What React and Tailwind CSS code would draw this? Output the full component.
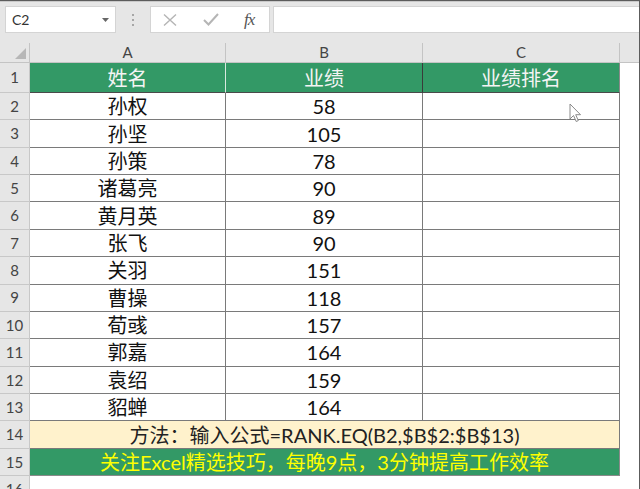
import React from 'react'

const rows = [
  ['孙权', '58'],
  ['孙坚', '105'],
  ['孙策', '78'],
  ['诸葛亮', '90'],
  ['黄月英', '89'],
  ['张飞', '90'],
  ['关羽', '151'],
  ['曹操', '118'],
  ['荀彧', '157'],
  ['郭嘉', '164'],
  ['袁绍', '159'],
  ['貂蝉', '164'],
]

const font = "font-['Lato','Noto_Sans_CJK_SC',sans-serif]"

function RowHead({ n, h = 'h-[27.36px]' }) {
  return (
    <div className={`w-[30px] shrink-0 ${h} flex items-center justify-center bg-[#e6e6e6] border-r border-b border-[#c8c8c8] text-[15px] text-[#444] ${font}`}>
      {n}
    </div>
  )
}

function Cursor() {
  return (
    <svg className="absolute left-[569px] top-[102px]" width="14" height="20" viewBox="0 0 14 20">
      <path d="M1 1 L1 16 L4.5 12.5 L7.2 18.5 L9.3 17.6 L6.7 11.7 L11.5 11.7 Z" fill="#fff" stroke="#8a8a8a" strokeWidth="1" strokeLinejoin="round" />
    </svg>
  )
}

export default function App() {
  return (
    <div className="relative w-[640px] h-[489px] overflow-hidden bg-white border-t border-r border-[#5c5c5c]">
      {/* formula bar */}
      <div className="bg-[#e6e6e6] border-t border-[#c9c9c9]">
        <div className="flex items-center h-[33px] pt-[2px]">
          <div className="ml-[5px] w-[111px] h-[27px] bg-white border border-[#d4d4d4] flex items-center justify-between pl-[6px] pr-[6px]">
            <span className={`text-[14px] text-[#333] ${font}`}>C2</span>
            <svg width="7" height="4" viewBox="0 0 7 4"><path d="M0 0 L7 0 L3.5 4 Z" fill="#666" /></svg>
          </div>
          <div className="w-[34px] flex flex-col items-center gap-[3px]">
            <span className="w-[2px] h-[2px] bg-[#a6a6a6]" />
            <span className="w-[2px] h-[2px] bg-[#a6a6a6]" />
            <span className="w-[2px] h-[2px] bg-[#a6a6a6]" />
          </div>
          <div className="w-[120px] h-[27px] bg-white border border-[#d4d4d4] flex items-center">
            <svg className="ml-[12px]" width="14" height="12" viewBox="0 0 14 12">
              <path d="M1 0.5 L13 11.5 M13 0.5 L1 11.5" stroke="#b5b5b5" strokeWidth="1.4" />
            </svg>
            <svg className="ml-[26px]" width="16" height="13" viewBox="0 0 16 13">
              <path d="M1 7 L5.5 11.5 L15 1" stroke="#b5b5b5" strokeWidth="2" fill="none" />
            </svg>
            <span className="ml-[25px] text-[17px] italic text-[#555] font-['Liberation_Serif',serif] tracking-[-1px]">fx</span>
          </div>
          <div className="ml-[3px] flex-1 h-[27px] bg-white border border-[#d4d4d4] border-r-0" />
        </div>
        <div className="h-[8px]" />
        {/* column headers */}
        <div className={`flex h-[20px] border-b border-[#c4c4c4] text-[15px] text-[#444] ${font}`}>
          <div className="w-[30px] shrink-0 relative border-r border-[#c4c4c4]">
            <svg className="absolute left-[15px] top-[5px]" width="11" height="11" viewBox="0 0 11 11"><path d="M11 0 L11 11 L0 11 Z" fill="#b7b7b7" /></svg>
          </div>
          <div className="w-[196px] shrink-0 flex items-center justify-center border-r border-[#c4c4c4]">A</div>
          <div className="w-[197px] shrink-0 flex items-center justify-center border-r border-[#c4c4c4]">B</div>
          <div className="w-[197px] shrink-0 flex items-center justify-center border-r border-[#c4c4c4]">C</div>
          <div className="flex-1" />
        </div>
      </div>

      {/* row 1 */}
      <div className={`flex text-[20px] ${font}`}>
        <RowHead n="1" h="h-[30px]" />
        <div className="w-[196px] shrink-0 h-[30px] bg-[#339966] text-[#f4f4f4] flex items-center justify-center border-r border-[#d8e9df] border-b border-b-[#4a4a4a]">姓名</div>
        <div className="w-[197px] shrink-0 h-[30px] bg-[#339966] text-[#f4f4f4] flex items-center justify-center border-r border-[#3a3a3a] border-b border-b-[#4a4a4a]">业绩</div>
        <div className="w-[197px] shrink-0 h-[30px] bg-[#339966] text-[#f4f4f4] flex items-center justify-center border-r border-[#8a8a8a] border-b border-b-[#4a4a4a]">业绩排名</div>
      </div>

      {rows.map(([name, score], i) => (
        <div key={i} className={`flex text-[20px] text-[#111] ${font}`}>
          <RowHead n={i + 2} />
          <div className="w-[196px] shrink-0 h-[27.36px] flex items-center justify-center border-r border-b border-[#7a7a7a]">{name}</div>
          <div className="w-[197px] shrink-0 h-[27.36px] flex items-center justify-center border-r border-b border-[#7a7a7a]">{score}</div>
          <div className="w-[197px] shrink-0 h-[27.36px] border-r border-b border-[#7a7a7a]" />
        </div>
      ))}

      <div className={`flex text-[20px] ${font}`}>
        <RowHead n="14" />
        <div className="w-[590px] shrink-0 h-[27.36px] bg-[#fff2cc] text-[#222] flex items-center justify-center border-r border-b border-[#7a7a7a]">
          方法：输入公式=RANK.EQ(B2,$B$2:$B$13)
        </div>
      </div>
      <div className={`flex text-[20px] ${font}`}>
        <RowHead n="15" />
        <div className="w-[590px] shrink-0 h-[27.36px] bg-[#339966] text-[#ffff00] flex items-center justify-center border-r border-b border-[#8a8a8a]">
          关注Excel精选技巧，每晚9点，3分钟提高工作效率
        </div>
      </div>
      <div className="flex">
        <div className={`w-[30px] shrink-0 h-[27px] flex items-center justify-center bg-[#e6e6e6] border-r border-[#c8c8c8] text-[15px] text-[#444] ${font}`}>16</div>
      </div>

      <Cursor />
    </div>
  )
}
